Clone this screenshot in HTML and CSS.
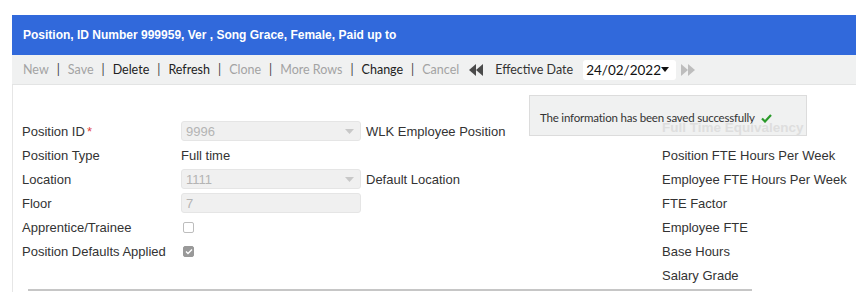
FILE: index.html
```html
<!DOCTYPE html>
<html>
<head>
<meta charset="utf-8">
<link rel="stylesheet" href="styles.css">
</head>
<body>
<div class="page">
  <div class="header">Position, ID Number 999959, Ver , Song Grace, Female, Paid up to</div>
  <div class="toolbar">
    <span class="tb dis">New</span><span class="sep">|</span>
    <span class="tb dis">Save</span><span class="sep">|</span>
    <span class="tb">Delete</span><span class="sep">|</span>
    <span class="tb">Refresh</span><span class="sep">|</span>
    <span class="tb dis">Clone</span><span class="sep">|</span>
    <span class="tb dis">More Rows</span><span class="sep">|</span>
    <span class="tb">Change</span><span class="sep">|</span>
    <span class="tb dis">Cancel</span>
    <svg class="nav nav-prev" width="16" height="12" viewBox="0 0 16 12"><polygon points="8,0 8,12 1,6" fill="#4a4a4a"/><polygon points="15,0 15,12 8,6" fill="#4a4a4a"/></svg>
    <span class="tb eff">Effective Date</span>
    <span class="datebox"><span class="dateval">24/02/2022</span><svg class="caret" width="8" height="5" viewBox="0 0 8 5"><polygon points="0,0 8,0 4,5" fill="#111"/></svg></span>
    <svg class="nav nav-next" width="14" height="12" viewBox="0 0 14 12"><polygon points="0,0 0,12 7,6" fill="#bdbdbd"/><polygon points="7,0 7,12 14,6" fill="#bdbdbd"/></svg>
  </div>
  <div class="content">
    <div class="notice">The information has been saved successfully <svg class="check" width="11" height="9" viewBox="0 0 11 9"><polyline points="1,4.5 4,7.5 10,1" fill="none" stroke="#2a9a2a" stroke-width="2.2"/></svg></div>
    <div class="cols">
      <div class="form">
        <div class="lbl">Position ID<span class="req">*</span></div>
        <div class="field sel">9996<svg class="fcaret" width="9" height="5" viewBox="0 0 9 5"><polygon points="0,0 9,0 4.5,5" fill="#c8c8c8"/></svg></div>
        <div class="lbl">WLK Employee Position</div>

        <div class="lbl">Position Type</div>
        <div class="val">Full time</div>
        <div></div>

        <div class="lbl">Location</div>
        <div class="field sel">1111<svg class="fcaret" width="9" height="5" viewBox="0 0 9 5"><polygon points="0,0 9,0 4.5,5" fill="#c8c8c8"/></svg></div>
        <div class="lbl">Default Location</div>

        <div class="lbl">Floor</div>
        <div class="field">7</div>
        <div></div>

        <div class="lbl">Apprentice/Trainee</div>
        <div class="cbcell"><span class="cb"></span></div>
        <div></div>

        <div class="lbl">Position Defaults Applied</div>
        <div class="cbcell"><span class="cb on"><svg width="8" height="7" viewBox="0 0 8 7"><polyline points="1,3.5 3,5.5 7,1.5" fill="none" stroke="#fff" stroke-width="1.4"/></svg></span></div>
        <div></div>
      </div>
      <div class="fte">
        <div class="fte-head">Full Time Equivalency</div>
        <div class="lbl">Position FTE Hours Per Week</div>
        <div class="lbl">Employee FTE Hours Per Week</div>
        <div class="lbl">FTE Factor</div>
        <div class="lbl">Employee FTE</div>
        <div class="lbl">Base Hours</div>
        <div class="lbl">Salary Grade</div>
      </div>
    </div>
    <div class="footline"></div>
  </div>
</div>
</body>
</html>
```

FILE: styles.css
```css
html, body {
  margin: 0;
  padding: 0;
  background: #fff;
}
body {
  font-family: "Liberation Sans", Arial, sans-serif;
  color: #333;
  width: 866px;
  height: 292px;
  overflow: hidden;
}
.page {
  padding: 15px 10px 0 12px;
}
.header {
  height: 40px;
  background: #3169db;
  color: #fff;
  font-weight: bold;
  font-size: 12px;
  display: flex;
  align-items: center;
  padding-left: 11px;
}
.toolbar {
  height: 29px;
  background: #f0f1f1;
  border-bottom: 1px solid #e3e4e4;
  display: flex;
  align-items: center;
  padding-left: 11px;
  font-family: Lato, "Open Sans", sans-serif;
  font-size: 12.5px;
}
.tb {
  color: #222;
}
.tb.dis {
  color: #a3a3a3;
}
.sep {
  color: #444;
  margin: 0 8px 0 8px;
}
.nav-prev {
  margin-left: 9px;
}
.eff {
  margin-left: 11px;
  color: #333;
}
.datebox {
  margin-left: 10px;
  height: 20px;
  width: 93px;
  box-sizing: border-box;
  background: #fff;
  border-radius: 3px;
  display: flex;
  align-items: center;
  padding-left: 3px;
  font-size: 13.5px;
  color: #111;
}
.dateval {
  flex: 1;
}
.caret {
  margin-right: 7px;
}
.nav-next {
  margin-left: 5px;
}
.content {
  position: relative;
  border-left: 1px solid #e6e6e6;
  height: 210px;
}
.notice {
  position: absolute;
  left: 516px;
  top: 10px;
  width: 278px;
  height: 41px;
  background: #f0f1f1;
  border: 1px solid #dcdcdc;
  font-family: Lato, "Open Sans", sans-serif;
  font-size: 11.5px;
  letter-spacing: -0.2px;
  color: #333;
  display: flex;
  align-items: center;
  padding-left: 10px;
  box-sizing: border-box;
  padding-top: 4px;
  white-space: nowrap;
}
.check {
  margin-left: 6px;
  margin-top: 2px;
}
.cols {
  display: flex;
  padding-left: 9px;
}
.form {
  display: grid;
  grid-template-columns: 154px 180px 291px;
  column-gap: 5px;
  grid-auto-rows: 24px;
  align-items: center;
  padding-top: 34px;
}
.lbl {
  font-size: 13px;
  color: #333;
  white-space: nowrap;
}
.req {
  color: #e0443e;
  margin-left: 2px;
}
.val {
  font-size: 13px;
  color: #333;
}
.field {
  height: 20px;
  box-sizing: border-box;
  background: #f0f0f0;
  border: 1px solid #e5e5e5;
  border-radius: 3px;
  font-size: 13px;
  color: #b4b4b4;
  display: flex;
  align-items: center;
  padding-left: 4px;
  justify-content: space-between;
}
.fcaret {
  margin-right: 6px;
}
.cbcell {
  display: flex;
  align-items: center;
  padding-left: 2px;
}
.cb {
  width: 11px;
  height: 11px;
  box-sizing: border-box;
  border: 1px solid #bdbdbd;
  border-radius: 2px;
  background: #fff;
  display: flex;
  align-items: center;
  justify-content: center;
}
.cb.on {
  background: #999;
  border-color: #999;
}
.fte {
  padding-top: 31px;
  display: flex;
  flex-direction: column;
  margin-left: 5px;
}
.fte > div {
  height: 24px;
  line-height: 24px;
}
.fte > .fte-head {
  position: relative;
  z-index: 1;
  font-weight: bold;
  font-size: 13.5px;
  color: #dedede;
  margin-bottom: 4px;
}
.footline {
  position: absolute;
  left: 15px;
  top: 204px;
  width: 724px;
  height: 0;
  border-top: 2px solid #c6c6c6;
}
```
